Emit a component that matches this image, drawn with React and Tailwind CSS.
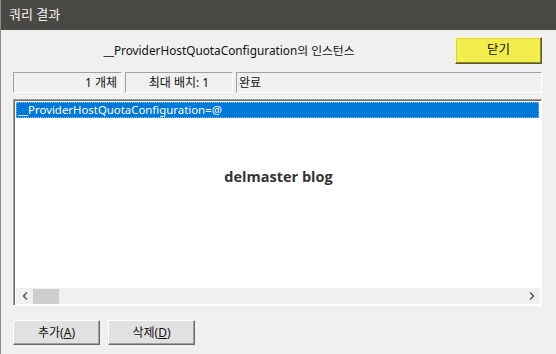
import React from "react";

const kr = { fontFamily: '"Noto Sans", "Noto Sans CJK KR", sans-serif' };

const Btn = ({ label, mnemonic, className = "" }) => (
  <button
    className={`h-[25px] w-[87px] bg-[#e1e1e1] border border-t-white border-l-white border-b-[#696969] border-r-[#696969] shadow-[inset_-1px_-1px_0_#a0a0a0] text-[12px] text-[#111] ${className}`}
    style={kr}
  >
    {label}(<span className="underline">{mnemonic}</span>)
  </button>
);

export default function App() {
  return (
    <div className="w-[556px] h-[354px] bg-[#f0f0f0] flex flex-col overflow-hidden border-l border-[#8a8a8a]" style={kr}>
      {/* title bar */}
      <div className="h-[30px] bg-[#4a4845] flex items-center pl-[8px] text-[13px] text-[#f2f2f2]">
        쿼리 결과
      </div>

      <div className="flex flex-col pl-[12px] pr-[14px]">
        {/* header */}
        <div className="flex items-center mt-[7px] h-[27px]">
          <div className="flex-1 text-center text-[11.8px] text-[#111]">
            __ProviderHostQuotaConfiguration의 인스턴스
          </div>
          <button className="ml-[10px] w-[87px] h-[27px] bg-[#f4ee4c] border border-t-[#fffbb0] border-l-[#fffbb0] border-b-[#5f5a22] border-r-[#5f5a22] shadow-[inset_-1px_-1px_0_#8c8530,inset_1px_1px_0_#d8d24a] text-[12.5px] text-[#111]">
            닫기
          </button>
        </div>

        {/* status */}
        <div className="flex mt-[8px] h-[21px] gap-[3px] text-[12px] text-[#111]">
          <div className="w-[109px] border border-t-[#a0a0a0] border-l-[#a0a0a0] border-b-white border-r-white flex items-center justify-end pr-[4px]">
            1 개체
          </div>
          <div className="w-[108px] border border-t-[#a0a0a0] border-l-[#a0a0a0] border-b-white border-r-white flex items-center justify-center">
            최대 배치: 1
          </div>
          <div className="flex-1 border border-t-[#a0a0a0] border-l-[#a0a0a0] border-b-white border-r-white flex items-center pl-[2px]">
            완료
          </div>
        </div>

        {/* list */}
        <div className="mt-[6px] h-[207px] bg-white border border-t-[#a0a0a0] border-l-[#a0a0a0] border-b-white border-r-white shadow-[inset_1px_1px_0_#696969] flex flex-col pl-[2px] pt-[2px]">
          <div className="h-[16px] bg-[#0078d7] outline-1 outline-dotted outline-[#7fbfff] -outline-offset-1 text-white text-[11.4px] leading-[16px] pl-[2px] mr-[2px]">
            __ProviderHostQuotaConfiguration=@
          </div>
          <div className="flex-1 flex items-center justify-center pb-[52px]">
            <span className="text-[14.5px] font-bold text-[#333]" style={{ fontFamily: '"Open Sans", "Noto Sans", sans-serif' }}>
              delmaster blog
            </span>
          </div>
          <div className="h-[16px] bg-[#f0f0f0] flex items-center mb-[1px] mr-[1px]">
            <div className="w-[17px] flex justify-center">
              <svg width="6" height="8" viewBox="0 0 6 8">
                <path d="M5 0.5 L1.5 4 L5 7.5" stroke="#555" strokeWidth="1.5" fill="none" />
              </svg>
            </div>
            <div className="w-[26px] h-[15px] bg-[#cdcdcd]" />
            <div className="flex-1" />
            <div className="w-[17px] flex justify-center">
              <svg width="6" height="8" viewBox="0 0 6 8">
                <path d="M1 0.5 L4.5 4 L1 7.5" stroke="#555" strokeWidth="1.5" fill="none" />
              </svg>
            </div>
          </div>
        </div>

        {/* bottom buttons */}
        <div className="flex gap-[8px] mt-[14px]">
          <Btn label="추가" mnemonic="A" />
          <Btn label="삭제" mnemonic="D" />
        </div>
      </div>
    </div>
  );
}
